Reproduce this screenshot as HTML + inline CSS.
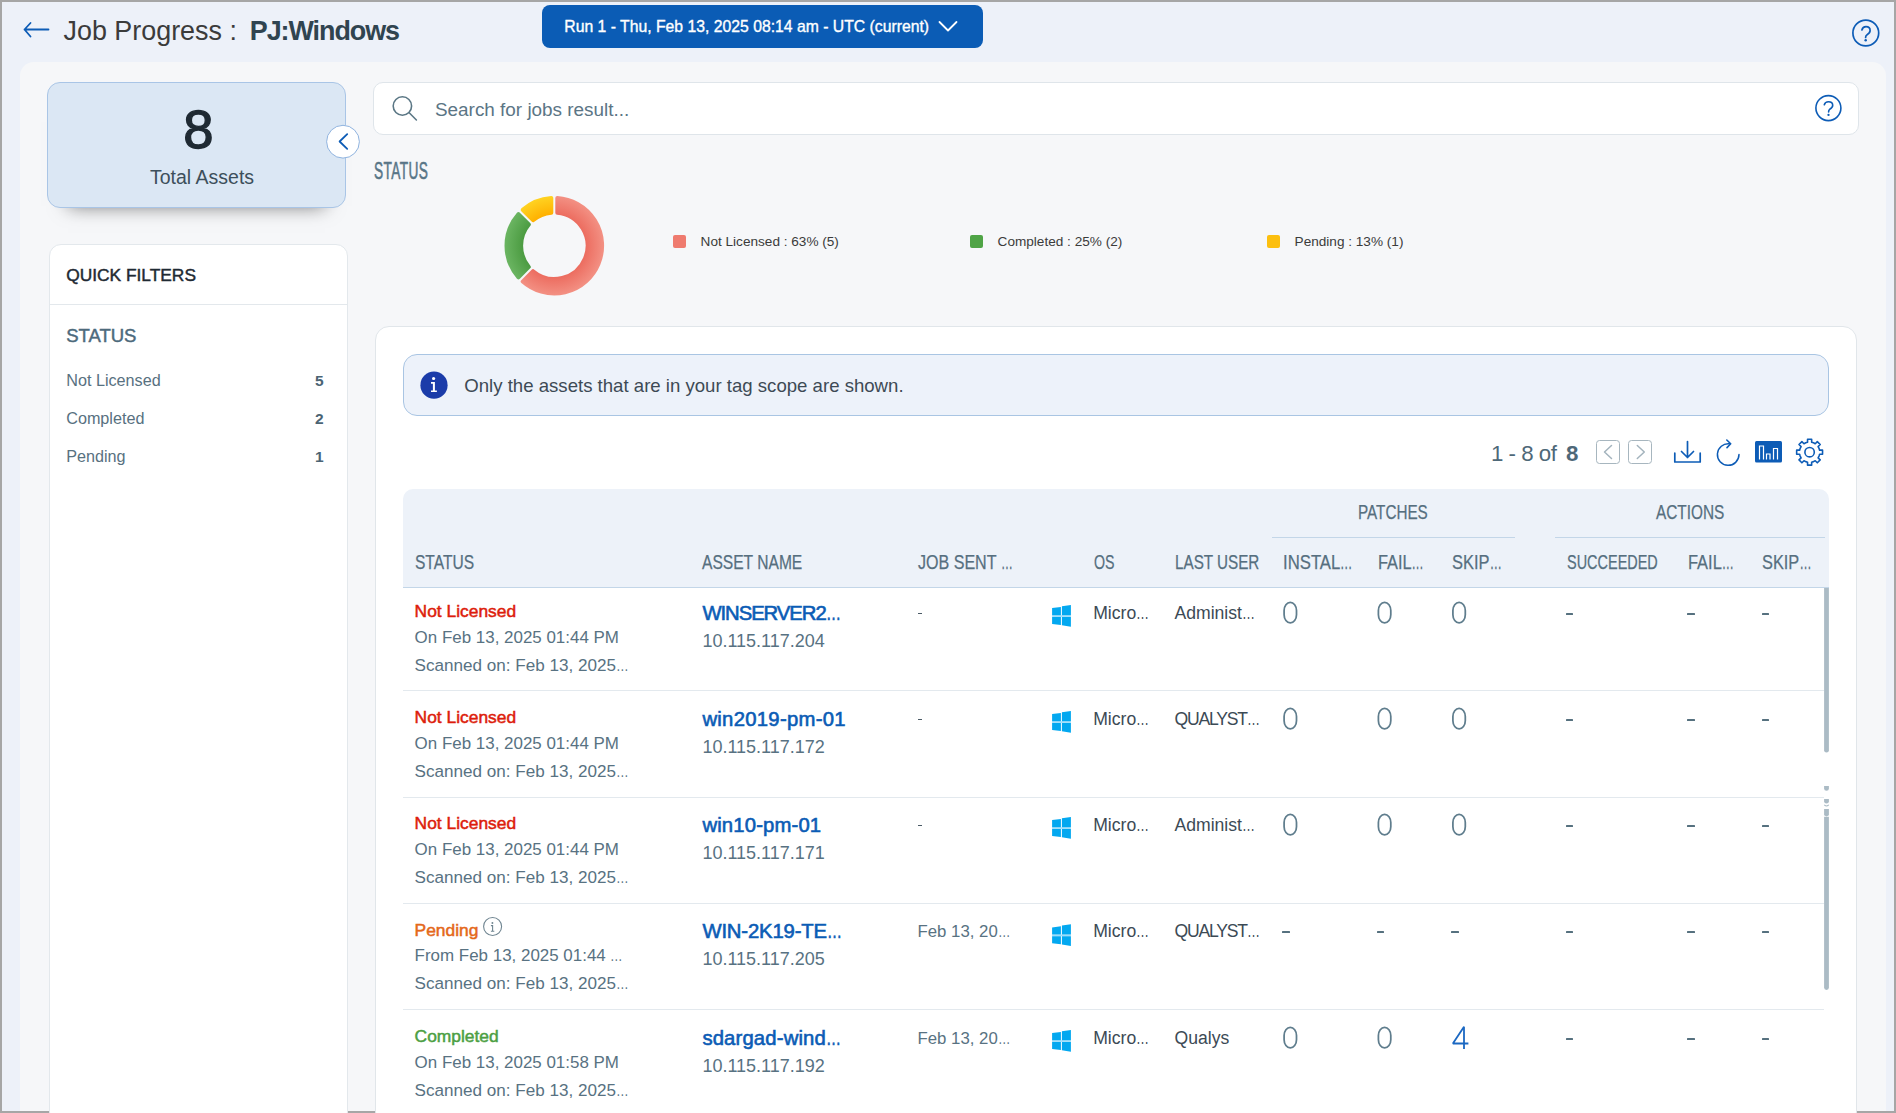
<!DOCTYPE html><html><head><meta charset="utf-8"><style>
html,body{margin:0;padding:0;}
body{width:1896px;height:1113px;overflow:hidden;position:relative;background:#a6a6a6;font-family:"Liberation Sans",sans-serif;}
.t{position:absolute;white-space:nowrap;}
.el{display:inline-block;transform:scaleX(0.74);transform-origin:0 50%;margin-right:-0.26em;}
.r{position:absolute;box-sizing:border-box;}
svg{position:absolute;overflow:visible;}
</style></head><body>
<div class="r" style="left:2px;top:2px;width:1892px;height:1109px;background:#edf1f9;"></div>
<div class="r" style="left:20px;top:62px;width:1866px;height:1049px;background:#f6f7f9;border-radius:14px 14px 0 0;"></div>
<svg style="left:0;top:0" width="60" height="60"><path d="M24.5 29.5 H48.5 M30.5 23 L24.5 29.5 L30.5 36.5" fill="none" stroke="#0d5cb6" stroke-width="1.8" stroke-linecap="round" stroke-linejoin="round"/></svg>
<div class="t " style="left:63.5px;top:18.00px;font-size:26.9px;line-height:26.9px;color:#3b3b3b;font-weight:400;">Job Progress :</div>
<div class="t " style="left:249.8px;top:18.00px;font-size:26.9px;line-height:26.9px;color:#304450;font-weight:700;letter-spacing:-1.05px;">PJ:Windows</div>
<div class="r" style="left:542px;top:5px;width:441px;height:43px;background:#0b5cb5;border-radius:8px;"></div>
<div class="t " style="left:564.3px;top:19.00px;font-size:15.75px;line-height:15.75px;color:#ffffff;font-weight:400;-webkit-text-stroke:0.35px #fff;">Run 1 - Thu, Feb 13, 2025 08:14 am - UTC (current)</div>
<svg style="left:0;top:0" width="1" height="1"><path d="M939.5 22 L948 30.5 L956.5 22" fill="none" stroke="#fff" stroke-width="1.8" stroke-linecap="round" stroke-linejoin="round"/></svg>
<svg style="left:0;top:0" width="1" height="1"><circle cx="1865.8" cy="33" r="12.9" fill="none" stroke="#0d5cb6" stroke-width="1.7"/><path d="M1861.9 30.0 Q1862.7 26.7 1866 26.7 Q1870.1 26.7 1870.1 30.5 Q1870.1 32.9 1867.1 34.7 Q1865.6 35.6 1865.6 37.5" fill="none" stroke="#0d5cb6" stroke-width="1.7" stroke-linecap="round"/><circle cx="1865.7" cy="40.2" r="1.25" fill="#0d5cb6"/></svg>
<div class="r" style="left:47px;top:82px;width:299px;height:126px;background:#dbe7f4;border:1px solid #a9c5e6;border-radius:13px;box-shadow:0 19px 18px -21px rgba(0,0,0,0.55);"></div>
<div class="t " style="left:183.3px;top:103.00px;font-size:54.5px;line-height:54.5px;color:#1f2a33;font-weight:400;-webkit-text-stroke:1.3px #1f2a33;">8</div>
<div class="t " style="left:150px;top:168.00px;font-size:19.5px;line-height:19.5px;color:#3d4f5b;font-weight:400;">Total Assets</div>
<svg style="left:0;top:0" width="1" height="1"><circle cx="343" cy="141.7" r="16.4" fill="#fff" stroke="#8fb3df" stroke-width="1"/><path d="M347.2 134.2 L339.6 141.5 L347.2 148.8" fill="none" stroke="#0d5cb6" stroke-width="1.8" stroke-linecap="round" stroke-linejoin="round"/></svg>
<div class="r" style="left:49px;top:244px;width:299px;height:880px;background:#fff;border:1px solid #e3e8ec;border-radius:12px;"></div>
<div class="r" style="left:50px;top:304px;width:297px;height:1px;background:#e3e8ec;"></div>
<div class="t " style="left:66.2px;top:267.00px;font-size:17.35px;line-height:17.35px;color:#1f2a33;font-weight:400;-webkit-text-stroke:0.45px #1f2a33;">QUICK FILTERS</div>
<div class="t " style="left:66.2px;top:327.00px;font-size:18.5px;line-height:18.5px;color:#4d6a7c;font-weight:400;-webkit-text-stroke:0.45px #4d6a7c;">STATUS</div>
<div class="t " style="left:66.2px;top:372.00px;font-size:16.2px;line-height:16.2px;color:#58717f;font-weight:400;">Not Licensed</div>
<div class="t " style="left:315px;top:373.00px;font-size:15.5px;line-height:15.5px;color:#4b6474;font-weight:700;">5</div>
<div class="t " style="left:66.2px;top:410.00px;font-size:16.2px;line-height:16.2px;color:#58717f;font-weight:400;">Completed</div>
<div class="t " style="left:315px;top:411.00px;font-size:15.5px;line-height:15.5px;color:#4b6474;font-weight:700;">2</div>
<div class="t " style="left:66.2px;top:448.00px;font-size:16.2px;line-height:16.2px;color:#58717f;font-weight:400;">Pending</div>
<div class="t " style="left:315px;top:449.00px;font-size:15.5px;line-height:15.5px;color:#4b6474;font-weight:700;">1</div>
<div class="r" style="left:373px;top:82px;width:1486px;height:53px;background:#fff;border:1px solid #dfe5ea;border-radius:10px;"></div>
<svg style="left:0;top:0" width="1" height="1"><circle cx="402.4" cy="106" r="9.2" fill="none" stroke="#5b7785" stroke-width="1.6"/><path d="M409.2 112.8 L416.4 120" stroke="#5b7785" stroke-width="1.6" stroke-linecap="round"/></svg>
<div class="t " style="left:435px;top:101.00px;font-size:18.9px;line-height:18.9px;color:#5b7585;font-weight:400;">Search for jobs result...</div>
<svg style="left:0;top:0" width="1" height="1"><circle cx="1828.4" cy="108.1" r="12.5" fill="none" stroke="#0d5cb6" stroke-width="1.6"/><path d="M1824.3 104.7 Q1825.1 101.7 1828.5 101.7 Q1832.7 101.7 1832.7 105.3 Q1832.7 107.7 1829.7 109.3 Q1828.6 110 1828.6 111.9" fill="none" stroke="#0d5cb6" stroke-width="1.6" stroke-linecap="round"/><circle cx="1828.5" cy="114.9" r="1.15" fill="#0d5cb6"/></svg>
<div class="t" style="left:373.6px;top:159.00px;font-size:24px;line-height:24px;color:#587587;font-weight:400;transform:scaleX(0.57);transform-origin:0 0;-webkit-text-stroke:0.6px #587587;letter-spacing:0.7px;">STATUS</div>
<svg style="left:0;top:0" width="1" height="1"><defs>
<radialGradient id="gr" gradientUnits="userSpaceOnUse" cx="554.3" cy="245.7" r="50"><stop offset="0.62" stop-color="#ec6c5f"/><stop offset="1" stop-color="#f39184"/></radialGradient>
<radialGradient id="gg" gradientUnits="userSpaceOnUse" cx="554.3" cy="245.7" r="50"><stop offset="0.62" stop-color="#4b9b41"/><stop offset="1" stop-color="#6bb562"/></radialGradient>
<radialGradient id="gy" gradientUnits="userSpaceOnUse" cx="554.3" cy="245.7" r="50"><stop offset="0.62" stop-color="#ffb000"/><stop offset="1" stop-color="#ffd322"/></radialGradient>
</defs>
<path d="M557.30 197.99 A47.8 47.8 0 1 1 522.69 281.55 L533.04 271.20 A33.2 33.2 0 1 0 557.30 212.64 Z" fill="url(#gr)" stroke="url(#gr)" stroke-width="4.0" stroke-linejoin="round"/>
<path d="M518.45 277.31 A47.8 47.8 0 0 1 518.45 214.09 L528.80 224.44 A33.2 33.2 0 0 0 528.80 266.96 Z" fill="url(#gg)" stroke="url(#gg)" stroke-width="4.0" stroke-linejoin="round"/>
<path d="M522.69 209.85 A47.8 47.8 0 0 1 551.30 197.99 L551.30 212.64 A33.2 33.2 0 0 0 533.04 220.20 Z" fill="url(#gy)" stroke="url(#gy)" stroke-width="4.0" stroke-linejoin="round"/>
</svg>
<div class="r" style="left:673px;top:235px;width:13px;height:13px;background:#ef7b6f;border-radius:2px;"></div>
<div class="t " style="left:700.6px;top:235.00px;font-size:13.6px;line-height:13.6px;color:#3b3b3b;font-weight:400;">Not Licensed : 63% (5)</div>
<div class="r" style="left:970px;top:235px;width:13px;height:13px;background:#4fa446;border-radius:2px;"></div>
<div class="t " style="left:997.6px;top:235.00px;font-size:13.6px;line-height:13.6px;color:#3b3b3b;font-weight:400;">Completed : 25% (2)</div>
<div class="r" style="left:1267px;top:235px;width:13px;height:13px;background:#fcbf0f;border-radius:2px;"></div>
<div class="t " style="left:1294.6px;top:235.00px;font-size:13.6px;line-height:13.6px;color:#3b3b3b;font-weight:400;">Pending : 13% (1)</div>
<div class="r" style="left:375px;top:326px;width:1482px;height:800px;background:#fff;border:1px solid #e1e6ea;border-radius:14px;"></div>
<div class="r" style="left:403px;top:354px;width:1426px;height:62px;background:#edf2fa;border:1px solid #a9c5e3;border-radius:14px;"></div>
<svg style="left:0;top:0" width="1" height="1"><circle cx="434" cy="385.2" r="13.6" fill="#1b3ca9"/><circle cx="433.6" cy="378.5" r="1.6" fill="#fff"/><path d="M431 382.1 H434.9 V390.4 H436.9 V392 H431 V390.4 H432.9 V383.8 H431 Z" fill="#fff"/></svg>
<div class="t " style="left:464.3px;top:377.00px;font-size:18.6px;line-height:18.6px;color:#3d4a55;font-weight:400;">Only the assets that are in your tag scope are shown.</div>
<div class="t " style="left:1491px;top:443.00px;font-size:22.3px;line-height:22.3px;color:#4e6878;font-weight:400;letter-spacing:-0.5px;">1 - 8 of</div>
<div class="t " style="left:1566px;top:443.00px;font-size:22.3px;line-height:22.3px;color:#4e6878;font-weight:700;">8</div>
<div class="r" style="left:1596px;top:440px;width:24px;height:24px;border:1.6px solid #a7b6bf;border-radius:3.5px;"></div>
<div class="r" style="left:1628px;top:440px;width:24px;height:24px;border:1.6px solid #a7b6bf;border-radius:3.5px;"></div>
<svg style="left:0;top:0" width="1" height="1"><path d="M1611.5 445.5 L1604.5 452 L1611.5 458.5" fill="none" stroke="#a3b3bd" stroke-width="1.5" stroke-linecap="round" stroke-linejoin="round"/><path d="M1637.3 445.5 L1644.3 452 L1637.3 458.5" fill="none" stroke="#a3b3bd" stroke-width="1.5" stroke-linecap="round" stroke-linejoin="round"/><path d="M1674.8 453.2 V462 H1700.2 V453.2" fill="none" stroke="#0d5cb6" stroke-width="1.7" stroke-linecap="round" stroke-linejoin="round"/><path d="M1687.5 441.5 V457.5 M1681.5 451.5 L1687.5 457.5 L1693.5 451.5" fill="none" stroke="#0d5cb6" stroke-width="1.7" stroke-linecap="round" stroke-linejoin="round"/><path d="M1729.4 443.8 A10.8 10.8 0 1 0 1739 454.6" fill="none" stroke="#0d5cb6" stroke-width="1.5" stroke-linecap="round"/><path d="M1726.8 440 L1730.7 443.8 L1727 447.6" fill="none" stroke="#0d5cb6" stroke-width="1.6" stroke-linecap="round" stroke-linejoin="round"/><rect x="1755" y="441" width="27" height="21.5" rx="1.5" fill="#0d5cb6"/><path d="M1759.5 459.5 V446 H1763.5 V459.5 M1766.5 459.5 V454 H1770 V459.5 M1773.5 459.5 V448.5 H1777.5 V459.5" fill="none" stroke="#fff" stroke-width="1.2"/></svg>
<svg style="left:0;top:0" width="1" height="1"><path d="M1805.70 442.78 L1807.55 442.21 L1807.55 439.26 L1811.65 439.26 L1811.65 442.21 L1813.50 442.78 L1813.50 442.78 L1815.22 443.69 L1817.30 441.60 L1820.20 444.50 L1818.11 446.58 L1819.02 448.30 L1819.02 448.30 L1819.59 450.15 L1822.54 450.15 L1822.54 454.25 L1819.59 454.25 L1819.02 456.10 L1819.02 456.10 L1818.11 457.82 L1820.20 459.90 L1817.30 462.80 L1815.22 460.71 L1813.50 461.62 L1813.50 461.62 L1811.65 462.19 L1811.65 465.14 L1807.55 465.14 L1807.55 462.19 L1805.70 461.62 L1805.70 461.62 L1803.98 460.71 L1801.90 462.80 L1799.00 459.90 L1801.09 457.82 L1800.18 456.10 L1800.18 456.10 L1799.61 454.25 L1796.66 454.25 L1796.66 450.15 L1799.61 450.15 L1800.18 448.30 L1800.18 448.30 L1801.09 446.58 L1799.00 444.50 L1801.90 441.60 L1803.98 443.69 L1805.70 442.78 Z" fill="none" stroke="#0d5cb6" stroke-width="1.6" stroke-linejoin="round"/><circle cx="1809.6" cy="452.2" r="4.7" fill="none" stroke="#0d5cb6" stroke-width="1.6"/></svg>
<div class="r" style="left:403px;top:489px;width:1426px;height:99px;background:#edf2f9;border-bottom:1px solid #c3d6e8;border-radius:10px 10px 0 0;"></div>
<div class="r" style="left:1272px;top:537px;width:243px;height:1px;background:#c3d6e8;"></div>
<div class="r" style="left:1555px;top:537px;width:270px;height:1px;background:#c3d6e8;"></div>
<div class="t" style="left:415.0px;top:552.00px;font-size:20.5px;line-height:20.5px;color:#566f7f;font-weight:400;transform:scaleX(0.7584);transform-origin:0 0;-webkit-text-stroke:0.25px #566f7f;">STATUS</div>
<div class="t" style="left:702.2px;top:552.00px;font-size:20.5px;line-height:20.5px;color:#566f7f;font-weight:400;transform:scaleX(0.761);transform-origin:0 0;-webkit-text-stroke:0.25px #566f7f;">ASSET NAME</div>
<div class="t" style="left:918.0px;top:552.00px;font-size:20.5px;line-height:20.5px;color:#566f7f;font-weight:400;transform:scaleX(0.783);transform-origin:0 0;-webkit-text-stroke:0.25px #566f7f;">JOB SENT <span class="el">…</span></div>
<div class="t" style="left:1094.0px;top:552.00px;font-size:20.5px;line-height:20.5px;color:#566f7f;font-weight:400;transform:scaleX(0.6926);transform-origin:0 0;-webkit-text-stroke:0.25px #566f7f;">OS</div>
<div class="t" style="left:1174.6px;top:552.00px;font-size:20.5px;line-height:20.5px;color:#566f7f;font-weight:400;transform:scaleX(0.743);transform-origin:0 0;-webkit-text-stroke:0.25px #566f7f;">LAST USER</div>
<div class="t" style="left:1283.0px;top:552.00px;font-size:20.5px;line-height:20.5px;color:#566f7f;font-weight:400;transform:scaleX(0.8157);transform-origin:0 0;-webkit-text-stroke:0.25px #566f7f;">INSTAL<span class="el">…</span></div>
<div class="t" style="left:1377.9px;top:552.00px;font-size:20.5px;line-height:20.5px;color:#566f7f;font-weight:400;transform:scaleX(0.797);transform-origin:0 0;-webkit-text-stroke:0.25px #566f7f;">FAIL<span class="el">…</span></div>
<div class="t" style="left:1451.5px;top:552.00px;font-size:20.5px;line-height:20.5px;color:#566f7f;font-weight:400;transform:scaleX(0.8017);transform-origin:0 0;-webkit-text-stroke:0.25px #566f7f;">SKIP<span class="el">…</span></div>
<div class="t" style="left:1566.6px;top:552.00px;font-size:20.5px;line-height:20.5px;color:#566f7f;font-weight:400;transform:scaleX(0.7055);transform-origin:0 0;-webkit-text-stroke:0.25px #566f7f;">SUCCEEDED</div>
<div class="t" style="left:1688.3px;top:552.00px;font-size:20.5px;line-height:20.5px;color:#566f7f;font-weight:400;transform:scaleX(0.8008);transform-origin:0 0;-webkit-text-stroke:0.25px #566f7f;">FAIL<span class="el">…</span></div>
<div class="t" style="left:1762.3px;top:552.00px;font-size:20.5px;line-height:20.5px;color:#566f7f;font-weight:400;transform:scaleX(0.7965);transform-origin:0 0;-webkit-text-stroke:0.25px #566f7f;">SKIP<span class="el">…</span></div>
<div class="t" style="left:1358.4px;top:502.00px;font-size:20.5px;line-height:20.5px;color:#566f7f;font-weight:400;transform:scaleX(0.7441);transform-origin:0 0;-webkit-text-stroke:0.25px #566f7f;">PATCHES</div>
<div class="t" style="left:1656.0px;top:502.00px;font-size:20.5px;line-height:20.5px;color:#566f7f;font-weight:400;transform:scaleX(0.7497);transform-origin:0 0;-webkit-text-stroke:0.25px #566f7f;">ACTIONS</div>
<div class="t " style="left:414.6px;top:603.00px;font-size:17.4px;line-height:17.4px;color:#dd1d0c;font-weight:400;-webkit-text-stroke:0.5px #dd1d0c;">Not Licensed</div>
<div class="t " style="left:414.6px;top:630.00px;font-size:16.95px;line-height:16.95px;color:#587282;font-weight:400;">On Feb 13, 2025 01:44 PM</div>
<div class="t " style="left:414.6px;top:657.00px;font-size:17.1px;line-height:17.1px;color:#587282;font-weight:400;">Scanned on: Feb 13, 2025<span class="el">…</span></div>
<div class="t " style="left:702.4px;top:603.00px;font-size:20.3px;line-height:20.3px;color:#0b5cb5;font-weight:400;-webkit-text-stroke:0.6px #0b5cb5;letter-spacing:-1.05px;">WINSERVER2<span class="el">…</span></div>
<div class="t " style="left:702.4px;top:632.00px;font-size:18px;line-height:18px;color:#587282;font-weight:400;">10.115.117.204</div>
<div class="r" style="left:917.6px;top:612.8px;width:4.6px;height:1.5px;background:#4a5a66;"></div>
<svg style="left:0;top:0" width="1" height="1"><path d="M1052.1 608.1 L1060.9 607 V615.3 H1052.1 Z M1061.9 606.3 L1070.9 605 V615.3 H1061.9 Z M1052.1 616.9 H1060.9 V624.9 L1052.1 624 Z M1061.9 616.9 H1070.9 V626.7 L1061.9 625.2 Z" fill="#03a8f0"/><path d="M1052.1 615.3 H1070.9 V616.9 H1052.1 Z" fill="#03a8f0" fill-opacity="0.4"/></svg>
<div class="t " style="left:1093.2px;top:605.00px;font-size:17.6px;line-height:17.6px;color:#3c4a55;font-weight:400;">Micro<span class="el">…</span></div>
<div class="t " style="left:1174.5px;top:605.00px;font-size:17.6px;line-height:17.6px;color:#3c4a55;font-weight:400;">Administ<span class="el">…</span></div>
<svg style="left:0;top:0" width="1" height="1"><rect x="1284.1" y="602.3" width="12.4" height="20.6" rx="6.2" ry="8.2" fill="none" stroke="#5f7d8d" stroke-width="1.75"/></svg>
<svg style="left:0;top:0" width="1" height="1"><rect x="1378.3999999999999" y="602.3" width="12.4" height="20.6" rx="6.2" ry="8.2" fill="none" stroke="#5f7d8d" stroke-width="1.75"/></svg>
<svg style="left:0;top:0" width="1" height="1"><rect x="1452.8999999999999" y="602.3" width="12.4" height="20.6" rx="6.2" ry="8.2" fill="none" stroke="#5f7d8d" stroke-width="1.75"/></svg>
<div class="r" style="left:1566.0px;top:612.8px;width:7.4px;height:1.8px;background:#56717f;border-radius:0.5px;"></div>
<div class="r" style="left:1687.3px;top:612.8px;width:7.4px;height:1.8px;background:#56717f;border-radius:0.5px;"></div>
<div class="r" style="left:1761.9px;top:612.8px;width:7.4px;height:1.8px;background:#56717f;border-radius:0.5px;"></div>
<div class="r" style="left:403px;top:689.9px;width:1421px;height:1px;background:#e3e9ee;"></div>
<div class="t " style="left:414.6px;top:709.00px;font-size:17.4px;line-height:17.4px;color:#dd1d0c;font-weight:400;-webkit-text-stroke:0.5px #dd1d0c;">Not Licensed</div>
<div class="t " style="left:414.6px;top:736.00px;font-size:16.95px;line-height:16.95px;color:#587282;font-weight:400;">On Feb 13, 2025 01:44 PM</div>
<div class="t " style="left:414.6px;top:763.00px;font-size:17.1px;line-height:17.1px;color:#587282;font-weight:400;">Scanned on: Feb 13, 2025<span class="el">…</span></div>
<div class="t " style="left:702.4px;top:709.00px;font-size:20.3px;line-height:20.3px;color:#0b5cb5;font-weight:400;-webkit-text-stroke:0.6px #0b5cb5;letter-spacing:0.28px;">win2019-pm-01</div>
<div class="t " style="left:702.4px;top:738.00px;font-size:18px;line-height:18px;color:#587282;font-weight:400;">10.115.117.172</div>
<div class="r" style="left:917.6px;top:718.8px;width:4.6px;height:1.5px;background:#4a5a66;"></div>
<svg style="left:0;top:0" width="1" height="1"><path d="M1052.1 714.1 L1060.9 713 V721.3 H1052.1 Z M1061.9 712.3 L1070.9 711 V721.3 H1061.9 Z M1052.1 722.9 H1060.9 V730.9 L1052.1 730 Z M1061.9 722.9 H1070.9 V732.7 L1061.9 731.2 Z" fill="#03a8f0"/><path d="M1052.1 721.3 H1070.9 V722.9 H1052.1 Z" fill="#03a8f0" fill-opacity="0.4"/></svg>
<div class="t " style="left:1093.2px;top:711.00px;font-size:17.6px;line-height:17.6px;color:#3c4a55;font-weight:400;">Micro<span class="el">…</span></div>
<div class="t " style="left:1174.5px;top:711.00px;font-size:17.6px;line-height:17.6px;color:#3c4a55;font-weight:400;letter-spacing:-1.2px;">QUALYST<span class="el">…</span></div>
<svg style="left:0;top:0" width="1" height="1"><rect x="1284.1" y="708.3" width="12.4" height="20.6" rx="6.2" ry="8.2" fill="none" stroke="#5f7d8d" stroke-width="1.75"/></svg>
<svg style="left:0;top:0" width="1" height="1"><rect x="1378.3999999999999" y="708.3" width="12.4" height="20.6" rx="6.2" ry="8.2" fill="none" stroke="#5f7d8d" stroke-width="1.75"/></svg>
<svg style="left:0;top:0" width="1" height="1"><rect x="1452.8999999999999" y="708.3" width="12.4" height="20.6" rx="6.2" ry="8.2" fill="none" stroke="#5f7d8d" stroke-width="1.75"/></svg>
<div class="r" style="left:1566.0px;top:718.8px;width:7.4px;height:1.8px;background:#56717f;border-radius:0.5px;"></div>
<div class="r" style="left:1687.3px;top:718.8px;width:7.4px;height:1.8px;background:#56717f;border-radius:0.5px;"></div>
<div class="r" style="left:1761.9px;top:718.8px;width:7.4px;height:1.8px;background:#56717f;border-radius:0.5px;"></div>
<div class="r" style="left:403px;top:796.9px;width:1421px;height:1px;background:#e3e9ee;"></div>
<div class="t " style="left:414.6px;top:815.00px;font-size:17.4px;line-height:17.4px;color:#dd1d0c;font-weight:400;-webkit-text-stroke:0.5px #dd1d0c;">Not Licensed</div>
<div class="t " style="left:414.6px;top:842.00px;font-size:16.95px;line-height:16.95px;color:#587282;font-weight:400;">On Feb 13, 2025 01:44 PM</div>
<div class="t " style="left:414.6px;top:869.00px;font-size:17.1px;line-height:17.1px;color:#587282;font-weight:400;">Scanned on: Feb 13, 2025<span class="el">…</span></div>
<div class="t " style="left:702.4px;top:815.00px;font-size:20.3px;line-height:20.3px;color:#0b5cb5;font-weight:400;-webkit-text-stroke:0.6px #0b5cb5;letter-spacing:0.15px;">win10-pm-01</div>
<div class="t " style="left:702.4px;top:844.00px;font-size:18px;line-height:18px;color:#587282;font-weight:400;">10.115.117.171</div>
<div class="r" style="left:917.6px;top:824.8px;width:4.6px;height:1.5px;background:#4a5a66;"></div>
<svg style="left:0;top:0" width="1" height="1"><path d="M1052.1 820.1 L1060.9 819 V827.3 H1052.1 Z M1061.9 818.3 L1070.9 817 V827.3 H1061.9 Z M1052.1 828.9 H1060.9 V836.9 L1052.1 836 Z M1061.9 828.9 H1070.9 V838.7 L1061.9 837.2 Z" fill="#03a8f0"/><path d="M1052.1 827.3 H1070.9 V828.9 H1052.1 Z" fill="#03a8f0" fill-opacity="0.4"/></svg>
<div class="t " style="left:1093.2px;top:817.00px;font-size:17.6px;line-height:17.6px;color:#3c4a55;font-weight:400;">Micro<span class="el">…</span></div>
<div class="t " style="left:1174.5px;top:817.00px;font-size:17.6px;line-height:17.6px;color:#3c4a55;font-weight:400;">Administ<span class="el">…</span></div>
<svg style="left:0;top:0" width="1" height="1"><rect x="1284.1" y="814.3" width="12.4" height="20.6" rx="6.2" ry="8.2" fill="none" stroke="#5f7d8d" stroke-width="1.75"/></svg>
<svg style="left:0;top:0" width="1" height="1"><rect x="1378.3999999999999" y="814.3" width="12.4" height="20.6" rx="6.2" ry="8.2" fill="none" stroke="#5f7d8d" stroke-width="1.75"/></svg>
<svg style="left:0;top:0" width="1" height="1"><rect x="1452.8999999999999" y="814.3" width="12.4" height="20.6" rx="6.2" ry="8.2" fill="none" stroke="#5f7d8d" stroke-width="1.75"/></svg>
<div class="r" style="left:1566.0px;top:824.8px;width:7.4px;height:1.8px;background:#56717f;border-radius:0.5px;"></div>
<div class="r" style="left:1687.3px;top:824.8px;width:7.4px;height:1.8px;background:#56717f;border-radius:0.5px;"></div>
<div class="r" style="left:1761.9px;top:824.8px;width:7.4px;height:1.8px;background:#56717f;border-radius:0.5px;"></div>
<div class="r" style="left:403px;top:902.9px;width:1421px;height:1px;background:#e3e9ee;"></div>
<div class="t " style="left:414.6px;top:922.00px;font-size:17.4px;line-height:17.4px;color:#e4681a;font-weight:400;-webkit-text-stroke:0.5px #e4681a;">Pending</div>
<svg style="left:0;top:0" width="1" height="1"><circle cx="492.6" cy="926.5" r="9.0" fill="none" stroke="#6f8591" stroke-width="1.1"/><circle cx="492.4" cy="923" r="0.95" fill="#6f8591"/><path d="M490.9 925.6 H492.6 V931.2 M490.9 931.2 H494.3" fill="none" stroke="#6f8591" stroke-width="1.1"/></svg>
<div class="t " style="left:414.6px;top:948.00px;font-size:16.95px;line-height:16.95px;color:#587282;font-weight:400;">From Feb 13, 2025 01:44 <span class="el">…</span></div>
<div class="t " style="left:414.6px;top:975.00px;font-size:17.1px;line-height:17.1px;color:#587282;font-weight:400;">Scanned on: Feb 13, 2025<span class="el">…</span></div>
<div class="t " style="left:702.4px;top:921.00px;font-size:20.3px;line-height:20.3px;color:#0b5cb5;font-weight:400;-webkit-text-stroke:0.6px #0b5cb5;letter-spacing:-0.15px;">WIN-2K19-TE<span class="el">…</span></div>
<div class="t " style="left:702.4px;top:950.00px;font-size:18px;line-height:18px;color:#587282;font-weight:400;">10.115.117.205</div>
<div class="t " style="left:917.5px;top:924.00px;font-size:16.8px;line-height:16.8px;color:#587282;font-weight:400;">Feb 13, 20<span class="el">…</span></div>
<svg style="left:0;top:0" width="1" height="1"><path d="M1052.1 927.4 L1060.9 926.3 V934.5999999999999 H1052.1 Z M1061.9 925.5999999999999 L1070.9 924.3 V934.5999999999999 H1061.9 Z M1052.1 936.1999999999999 H1060.9 V944.1999999999999 L1052.1 943.3 Z M1061.9 936.1999999999999 H1070.9 V946.0 L1061.9 944.5 Z" fill="#03a8f0"/><path d="M1052.1 934.5999999999999 H1070.9 V936.1999999999999 H1052.1 Z" fill="#03a8f0" fill-opacity="0.4"/></svg>
<div class="t " style="left:1093.2px;top:923.00px;font-size:17.6px;line-height:17.6px;color:#3c4a55;font-weight:400;">Micro<span class="el">…</span></div>
<div class="t " style="left:1174.5px;top:923.00px;font-size:17.6px;line-height:17.6px;color:#3c4a55;font-weight:400;letter-spacing:-1.2px;">QUALYST<span class="el">…</span></div>
<div class="r" style="left:1282.4px;top:930.8px;width:7.7px;height:1.8px;background:#56717f;border-radius:0.5px;"></div>
<div class="r" style="left:1376.7px;top:930.8px;width:7.7px;height:1.8px;background:#56717f;border-radius:0.5px;"></div>
<div class="r" style="left:1451.2px;top:930.8px;width:7.7px;height:1.8px;background:#56717f;border-radius:0.5px;"></div>
<div class="r" style="left:1566.0px;top:930.8px;width:7.4px;height:1.8px;background:#56717f;border-radius:0.5px;"></div>
<div class="r" style="left:1687.3px;top:930.8px;width:7.4px;height:1.8px;background:#56717f;border-radius:0.5px;"></div>
<div class="r" style="left:1761.9px;top:930.8px;width:7.4px;height:1.8px;background:#56717f;border-radius:0.5px;"></div>
<div class="r" style="left:403px;top:1008.9px;width:1421px;height:1px;background:#e3e9ee;"></div>
<div class="t " style="left:414.6px;top:1028.00px;font-size:17.4px;line-height:17.4px;color:#4c9f43;font-weight:400;-webkit-text-stroke:0.5px #4c9f43;">Completed</div>
<div class="t " style="left:414.6px;top:1055.00px;font-size:16.95px;line-height:16.95px;color:#587282;font-weight:400;">On Feb 13, 2025 01:58 PM</div>
<div class="t " style="left:414.6px;top:1082.00px;font-size:17.1px;line-height:17.1px;color:#587282;font-weight:400;">Scanned on: Feb 13, 2025<span class="el">…</span></div>
<div class="t " style="left:702.4px;top:1028.00px;font-size:20.3px;line-height:20.3px;color:#0b5cb5;font-weight:400;-webkit-text-stroke:0.6px #0b5cb5;letter-spacing:0.15px;">sdargad-wind<span class="el">…</span></div>
<div class="t " style="left:702.4px;top:1057.00px;font-size:18px;line-height:18px;color:#587282;font-weight:400;">10.115.117.192</div>
<div class="t " style="left:917.5px;top:1031.00px;font-size:16.8px;line-height:16.8px;color:#587282;font-weight:400;">Feb 13, 20<span class="el">…</span></div>
<svg style="left:0;top:0" width="1" height="1"><path d="M1052.1 1033.1 L1060.9 1032 V1040.3 H1052.1 Z M1061.9 1031.3 L1070.9 1030 V1040.3 H1061.9 Z M1052.1 1041.9 H1060.9 V1049.9 L1052.1 1049 Z M1061.9 1041.9 H1070.9 V1051.7 L1061.9 1050.2 Z" fill="#03a8f0"/><path d="M1052.1 1040.3 H1070.9 V1041.9 H1052.1 Z" fill="#03a8f0" fill-opacity="0.4"/></svg>
<div class="t " style="left:1093.2px;top:1030.00px;font-size:17.6px;line-height:17.6px;color:#3c4a55;font-weight:400;">Micro<span class="el">…</span></div>
<div class="t " style="left:1174.5px;top:1030.00px;font-size:17.6px;line-height:17.6px;color:#3c4a55;font-weight:400;">Qualys</div>
<svg style="left:0;top:0" width="1" height="1"><rect x="1284.1" y="1027.3" width="12.4" height="20.6" rx="6.2" ry="8.2" fill="none" stroke="#5f7d8d" stroke-width="1.75"/></svg>
<svg style="left:0;top:0" width="1" height="1"><rect x="1378.3999999999999" y="1027.3" width="12.4" height="20.6" rx="6.2" ry="8.2" fill="none" stroke="#5f7d8d" stroke-width="1.75"/></svg>
<svg style="left:0;top:0" width="1" height="1"><path d="M1464.0 1048.9 V1026.8 L1452.8999999999999 1043.5 H1468.3999999999999" fill="none" stroke="#1b68c2" stroke-width="1.8" stroke-linejoin="bevel"/></svg>
<div class="r" style="left:1566.0px;top:1037.8px;width:7.4px;height:1.8px;background:#56717f;border-radius:0.5px;"></div>
<div class="r" style="left:1687.3px;top:1037.8px;width:7.4px;height:1.8px;background:#56717f;border-radius:0.5px;"></div>
<div class="r" style="left:1761.9px;top:1037.8px;width:7.4px;height:1.8px;background:#56717f;border-radius:0.5px;"></div>
<svg style="left:0;top:0" width="1" height="1"><path d="M1824.1 588 H1828.9 V750.2 A2.4 2.4 0 0 1 1824.1 750.2 Z" fill="#abbbc5"/><path d="M1824.1 786 H1828.9 V788.4 A2.4 2.4 0 0 1 1824.1 788.4 Z" fill="#abbbc5"/><path d="M1824.1 799.1 H1828.9 V801.2 A2.4 2.4 0 0 1 1824.1 801.2 Z" fill="#abbbc5"/><path d="M1824.1 804.6 Q1826.5 806.2 1828.9 804.6 L1828.9 805.4 Q1826.5 807.4 1824.1 805.4 Z" fill="#abbbc5"/><path d="M1824.1 809 H1828.9 V815.2 L1826.5 816.4 L1824.1 815.2 Z" fill="#abbbc5"/><path d="M1824.1 816.8 H1828.9 V987.5 A2.4 2.4 0 0 1 1824.1 987.5 Z" fill="#abbbc5"/></svg>
</body></html>
